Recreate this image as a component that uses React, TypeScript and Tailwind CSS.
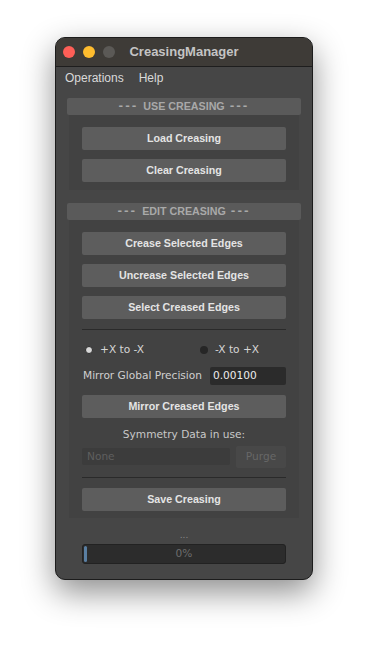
import React from 'react';

const regular = { fontFamily: '"DejaVu Sans", "Liberation Sans", sans-serif' };
const bold = { fontFamily: '"Liberation Sans", Arial, sans-serif' };
const dash = { fontFamily: '"DejaVu Sans", sans-serif' };

const Btn: React.FC<{ label: string; className?: string }> = ({ label, className = '' }) => (
  <div
    style={bold}
    className={`h-[23px] w-[204px] mx-auto flex items-center justify-center rounded-[2px] bg-[#5d5d5d] text-[10.7px] font-bold text-[#e4e4e4] ${className}`}
  >
    {label}
  </div>
);

const Header: React.FC<{ label: string; className?: string }> = ({ label, className = '' }) => (
  <div
    style={bold}
    className={`h-[17px] w-[234px] mx-auto flex items-center justify-center gap-[5px] rounded-[2px] bg-[#5a5a5a] text-[10.7px] font-bold text-[#a9a9a9] ${className}`}
  >
    <span style={dash} className="text-[11px] tracking-[2px]">---</span>
    <span>{label}</span>
    <span style={dash} className="text-[11px] tracking-[2px]">---</span>
  </div>
);

const App: React.FC = () => {
  return (
    <div className="w-[368px] h-[654px] bg-white overflow-hidden pt-[37px]" style={regular}>
      <div className="ml-[55px] w-[258px] h-[543px] rounded-[10px] border border-[#1c1c1c] bg-[#464646] overflow-hidden shadow-[0_12px_32px_rgba(0,0,0,0.45)] flex flex-col">
        {/* title bar */}
        <div className="relative h-[29px] shrink-0 bg-[#3e3b37] border-b border-[#1e1e1e] flex items-center pl-[7px]">
          <div className="flex gap-[8px]">
            <span className="w-[12px] h-[12px] rounded-full bg-[#fe5f57]" />
            <span className="w-[12px] h-[12px] rounded-full bg-[#febc2e]" />
            <span className="w-[12px] h-[12px] rounded-full bg-[#5b5956]" />
          </div>
          <div
            style={bold}
            className="absolute inset-0 flex items-center justify-center text-[13px] font-bold text-[#c4c4c4]"
          >
            CreasingManager
          </div>
        </div>

        {/* menu */}
        <div style={bold} className="h-[21px] shrink-0 flex items-center gap-[15px] pl-[9px] text-[12px] text-[#d9d9d9]">
          <span>Operations</span>
          <span>Help</span>
        </div>

        {/* use creasing */}
        <Header label="USE CREASING" className="mt-[10px]" />
        <div className="w-[230px] mx-auto bg-[#424242] pt-[12px] pb-[8px] flex flex-col gap-[9px]">
          <Btn label="Load Creasing" />
          <Btn label="Clear Creasing" />
        </div>

        {/* edit creasing */}
        <Header label="EDIT CREASING" className="mt-[13px]" />
        <div className="w-[230px] mx-auto bg-[#424242] pt-[12px] pb-[7px] flex flex-col">
          <div className="flex flex-col gap-[9px]">
            <Btn label="Crease Selected Edges" />
            <Btn label="Uncrease Selected Edges" />
            <Btn label="Select Creased Edges" />
          </div>
          <div className="mt-[10px] w-[204px] mx-auto h-px bg-[#2a2a2a]" />

          <div className="mt-[12px] w-[204px] mx-auto flex items-center text-[10.6px] text-[#d6d6d6]">
            <div className="flex items-center gap-[7px] pl-[3px] w-[118px]">
              <span className="w-[8px] h-[8px] rounded-full bg-[#d8d8d8] border border-[#2a2a2a]" />
              <span>+X to -X</span>
            </div>
            <div className="flex items-center gap-[7px]">
              <span className="w-[8px] h-[8px] rounded-full bg-[#262626]" />
              <span>-X to +X</span>
            </div>
          </div>

          <div className="mt-[9px] w-[204px] mx-auto flex items-center justify-between">
            <span className="text-[10.6px] text-[#d0d0d0] pl-[1px]">Mirror Global Precision</span>
            <div className="w-[76px] h-[18px] bg-[#2b2b2b] rounded-[2px] flex items-center pl-[3px] text-[10.6px] text-[#ececec]">
              0.00100
            </div>
          </div>

          <Btn label="Mirror Creased Edges" className="mt-[10px]" />

          <div className="mt-[9px] text-center text-[10.6px] text-[#c9c9c9]">Symmetry Data in use:</div>

          <div className="mt-[3px] w-[204px] mx-auto flex items-center justify-between">
            <div className="w-[148px] h-[17px] bg-[#3c3c3c] rounded-[2px] flex items-center pl-[5px] text-[10.6px] text-[#5f5f5f]">
              None
            </div>
            <div className="w-[50px] h-[22px] bg-[#484848] rounded-[2px] flex items-center justify-center text-[10.6px] text-[#676767]">
              Purge
            </div>
          </div>

          <div className="mt-[9px] w-[204px] mx-auto h-px bg-[#2a2a2a]" />
          <Btn label="Save Creasing" className="mt-[10px]" />
        </div>

        <div className="mt-[13px] text-center text-[9px] leading-[9px] text-[#8a8a8a]">...</div>

        <div className="mt-[4px] w-[204px] h-[20px] mx-auto rounded-[3px] border border-[#222] bg-[#2c2c2c] relative flex items-center justify-center text-[10.6px] text-[#6d6d6d]">
          <div className="absolute left-[1px] top-[1px] bottom-[1px] w-[3px] rounded-[2px] bg-[#5a7fa2]" />
          0%
        </div>
      </div>
    </div>
  );
};

export default App;
